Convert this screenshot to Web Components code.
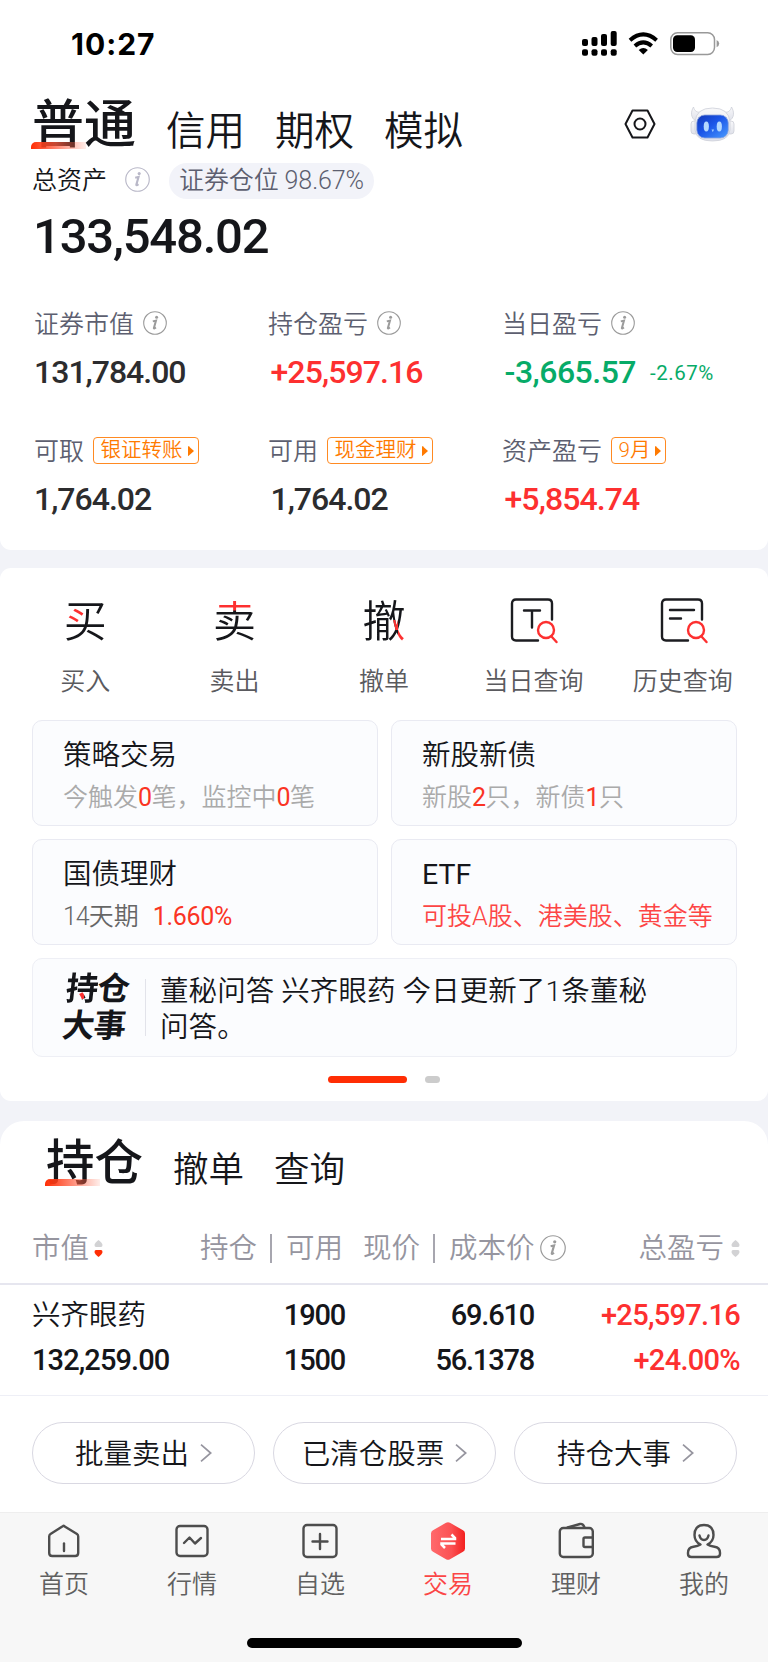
<!DOCTYPE html>
<html lang="zh-CN">
<head>
<meta charset="utf-8">
<title>交易</title>
<style>
    html, body { margin: 0; padding: 0; }
    body {
        width: 768px; height: 1662px; overflow: hidden;
        background: #f2f3f8; color: #15161a;
        font-family: Roboto, "Noto Sans CJK SC", sans-serif;
        font-weight: 350; line-height: 1.3;
    }
</style>
</head>
<body>
<trade-page></trade-page>
<script>
// shared base: every element writes its template in an open shadow root
class BaseElement extends HTMLElement {
    constructor() {
        super();
        this.attachShadow({ mode: 'open' });
    }
    connectedCallback() {
        this.shadowRoot.innerHTML = this.render();
    }
    attr(name, fallback = '') {
        return this.getAttribute(name) || fallback;
    }
}

class InfoMark extends BaseElement {
    render() {
        const size = this.attr('size', '24');
        const color = this.attr('color', '#9b9b9b');
        return `
            <style>:host { display: block; flex: none; line-height: 0; }</style>
            <svg width="${size}" height="${size}" viewBox="0 0 24 24" fill="none">
                <circle cx="12" cy="12" r="11.3" stroke="${color}" stroke-width="1.1"/>
                <circle cx="13.6" cy="6.3" r="1.5" fill="${color}"/>
                <path d="M9.800 10.400l3.200-.8-2.100 7.300c-.2.9.4.8 2-.5" stroke="${color}" stroke-width="2"/>
            </svg>
        `;
    }
}
customElements.define('info-mark', InfoMark);

class StatusBar extends BaseElement {
    render() {
        return `
            <style>
                :host { display: flex; justify-content: space-between; height: 88px; padding: 0 48px 0 71px; }
                .time { font: 700 30px/88px Inter, sans-serif; color: #000; letter-spacing: 1px; }
                .icons { display: flex; padding-top: 31px; }
            </style>
            <span class="time">10:27</span>
            <div class="icons">
                <svg width="138" height="26" viewBox="0 0 138 26">
                    <g fill="#000">
                        <rect x="0" y="8" width="6" height="7" rx="2"/>
                        <rect x="9.5" y="6" width="6" height="9" rx="2"/>
                        <rect x="19" y="3" width="6" height="12" rx="2"/>
                        <rect x="28.7" y="0" width="6" height="15" rx="2"/>
                        <rect x="0" y="18.3" width="6" height="6.5" rx="2"/>
                        <rect x="9.5" y="18.3" width="6" height="6.5" rx="2"/>
                        <rect x="19" y="18.3" width="6" height="6.5" rx="2"/>
                        <rect x="28.7" y="18.3" width="6" height="6.5" rx="2"/>
                        <path d="M61.3 23.5l-4.6-4.6q4.6-3.6 9.2 0z"/>
                    </g>
                    <g fill="none" stroke="#000" stroke-width="4">
                        <path d="M48 9.2q13.300-11.600 26.600 0"/>
                        <path d="M52.900 14.900q8.400-7.200 16.800 0"/>
                    </g>
                    <rect x="88.800" y="1.800" width="43.700" height="21.600" rx="6.800" fill="none" stroke="#999" stroke-width="1.500"/>
                    <rect x="91" y="4.200" width="22" height="16.800" rx="4.200"/>
                    <path d="M134.600 9q2.600 1.200 2.600 3.600t-2.600 3.600z" fill="#999"/>
                </svg>
            </div>
        `;
    }
}
customElements.define('status-bar', StatusBar);

// first tab is the selected one, the size comes from css variables
class SectionTabs extends BaseElement {
    render() {
        const [active, ...rest] = this.attr('items').split(',');
        return `
            <style>
                :host { display: flex; align-items: flex-start; gap: var(--gap, 30px); font-size: var(--size, 39.500px); line-height: 1.3; white-space: nowrap; }
                .tab { padding-top: var(--drop, 11px); }
                .active { position: relative; font-size: var(--active-size, 52px); font-weight: 500; line-height: 1.2; }
                .active::after {
                    content: ""; position: absolute; left: -1px; bottom: var(--mark, 8px); width: 55px; height: 7px;
                    border-radius: 5px 0 0 0;
                    background: linear-gradient(90deg, #ff2d04, rgba(255, 90, 60, .75) 45%, rgba(255, 120, 90, .12));
                }
            </style>
            <span class="active">${active}</span>
            ${rest.map(item => `<span class="tab">${item}</span>`).join('')}
        `;
    }
}
customElements.define('section-tabs', SectionTabs);

class HeadTools extends BaseElement {
    render() {
        return `
            <style>:host { display: flex; align-items: center; gap: 34px; }</style>
            <svg width="32" height="30" viewBox="0 0 32 30" fill="none" stroke="#16171b" stroke-width="2" stroke-linejoin="round">
                <path d="M8.500 1.500h15L30.500 15l-7 13.500h-15L1.500 15z"/>
                <circle cx="16" cy="15" r="5.500"/>
            </svg>
            <svg width="45" height="36" viewBox="0 0 45 36">
                <defs>
                    <linearGradient id="face" x1="0" y1="0" x2="1" y2="1">
                        <stop offset="0" stop-color="#1238b8"/><stop offset=".45" stop-color="#1b55e8"/><stop offset="1" stop-color="#4a9cff"/>
                    </linearGradient>
                    <linearGradient id="shell" x1="0" y1="0" x2="0" y2="1">
                        <stop offset="0" stop-color="#f8f8fa"/><stop offset="1" stop-color="#dfe1ea"/>
                    </linearGradient>
                </defs>
                <g fill="url(#shell)" stroke="#cdcfd8" stroke-width=".8">
                    <path d="M3.500 1C.500 6 .500 12 6 15L12 6C7 7 4.500 5 3.500 1zM41.500 1c3 5 3 11-2.500 14l-6-9c5 1 7.500-1 8.500-5z"/>
                    <rect x="1" y="15" width="7" height="13" rx="3"/>
                    <rect x="37" y="15" width="7" height="13" rx="3"/>
                    <path d="M5 16Q6 2 22.500 2T40 16v8q-1 11-17.500 11T5 24z"/>
                </g>
                <rect x="6.800" y="9" width="31.500" height="23" rx="8" fill="url(#face)" stroke="#8fa6dc" stroke-width=".8"/>
                <ellipse cx="16.300" cy="20.500" rx="2.600" ry="5" fill="#b4d8ff"/>
                <ellipse cx="29.300" cy="20.500" rx="2.600" ry="5" fill="#b4d8ff"/>
                <path d="M21.500 23.500h2.600l-1.300 2.800z" fill="#9fcbff"/>
            </svg>
        `;
    }
}
customElements.define('head-tools', HeadTools);

class AssetMetric extends BaseElement {
    render() {
        const tag = this.attr('tag');
        const note = this.attr('note');
        return `
            <style>
                :host { display: flex; flex-direction: column; white-space: nowrap; }
                .label { display: flex; align-items: center; height: 36px; font-size: 25px; color: #5d5f70; gap: 8.500px; }
                .value { display: flex; align-items: center; height: 38px; margin-top: 11px; margin-left: var(--shift, 0); font-size: 32px; font-weight: 500; letter-spacing: -1px; color: #2c2c2e; gap: 14px; }
                .value.up { color: #fd3030; letter-spacing: -.900px; }
                .value.down { color: #07ab68; letter-spacing: -.500px; }
                .note { font-size: 20.500px; font-weight: 450; letter-spacing: .500px; }
                .tag { box-sizing: border-box; height: 27px; display: flex; align-items: center; gap: 5px; padding: 0 4px 0 7px; border: 1px solid #ff8a22; border-radius: 4px; color: #ff7a00; font-size: 20.500px; margin-top: -3px; }
                .tag svg { display: block; }
                info-mark { margin-top: -4px; }
            </style>
            <div class="label">
                <span>${this.attr('label')}</span>
                ${tag
                    ? `<span class="tag">${tag}<svg width="6" height="10" viewBox="0 0 6 10"><path d="M0 .5q0-.7.700-.2L6 5 .700 9.700Q0 10.200 0 9.500z" fill="#ff7a00"/></svg></span>`
                    : '<info-mark></info-mark>'}
            </div>
            <div class="value ${this.attr('trend')}">
                <span>${this.attr('value')}</span>
                ${note ? `<span class="note">${note}</span>` : ''}
            </div>
        `;
    }
}
customElements.define('asset-metric', AssetMetric);

class AssetPanel extends BaseElement {
    render() {
        return `
            <style>
                :host { display: block; box-sizing: border-box; height: 550px; background: #fff; border-radius: 0 0 11px 11px; }
                .head { display: flex; justify-content: space-between; height: 75px; padding: 0 33px 0 32px; }
                section-tabs { margin-top: 7px; }
                head-tools { height: 71px; }
                .total { display: flex; align-items: center; height: 36px; padding-left: 32px; font-size: 25px; }
                .total info-mark { margin: -4px 19px 0 18px; }
                .pill { height: 36px; line-height: 35px; padding: 0 10px; border-radius: 18px; background: #f2f3f9; color: #5d5f70; white-space: nowrap; letter-spacing: -.1px; }
                .amount { padding-left: 33px; height: 74px; line-height: 75px; font-size: 49px; font-weight: 500; letter-spacing: -1.200px; }
                .grid { display: grid; grid-template-columns: repeat(3, 234px); row-gap: 42px; padding: 34px 0 0 34px; }
                asset-metric:not(:nth-child(3n+1)) { --shift: 2.500px; }
            </style>
            <status-bar></status-bar>
            <div class="head">
                <section-tabs items="普通,信用,期权,模拟"></section-tabs>
                <head-tools></head-tools>
            </div>
            <div class="total">
                <span>总资产</span>
                <info-mark size="25" color="#b9b8c8"></info-mark>
                <span class="pill">证券仓位 98.67%</span>
            </div>
            <div class="amount">133,548.02</div>
            <div class="grid">
                <asset-metric label="证券市值" value="131,784.00"></asset-metric>
                <asset-metric label="持仓盈亏" value="+25,597.16" trend="up"></asset-metric>
                <asset-metric label="当日盈亏" value="-3,665.57" note="-2.67%" trend="down"></asset-metric>
                <asset-metric label="可取" value="1,764.02" tag="银证转账"></asset-metric>
                <asset-metric label="可用" value="1,764.02" tag="现金理财"></asset-metric>
                <asset-metric label="资产盈亏" value="+5,854.74" tag="9月" trend="up"></asset-metric>
            </div>
        `;
    }
}
customElements.define('asset-panel', AssetPanel);

class QuickAction extends BaseElement {
    static GLASS = '<g stroke="#fd3030"><circle cx="36" cy="32" r="8"/><path d="M41.500 38.500l5 5.500"/></g>';
    static ICONS = {
        today: '<path d="M28 42.500H6q-4 0-4-4V5.500q0-4 4-4h32q4 0 4 4v16"/><path d="M14 12.500h16M22 12.500v17"/>',
        history: '<path d="M28 42.500H6q-4 0-4-4V5.500q0-4 4-4h32q4 0 4 4v16"/><path d="M10 12h24M10 20.500h11"/>'
    };
    render() {
        const icon = QuickAction.ICONS[this.attr('icon')];
        const word = this.attr('word');
        return `
            <style>
                :host { display: flex; flex-direction: column; align-items: center; color: #5a5a5e; white-space: nowrap; }
                .icon { height: 70px; display: flex; align-items: center; }
                svg { display: block; margin-left: 2px; }
                .word { font-size: 43px; line-height: 62px; padding-top: 1px; color: transparent; -webkit-background-clip: text; background-clip: text; background-color: #15161a; background-repeat: no-repeat; }
                /* one part of the sign is tinted red */
                .buy { background-image: linear-gradient(#fd3030, #fd3030); background-size: 17px 16px; background-position: 3px 17px; }
                .sell { background-image: linear-gradient(#fd3030, #fd3030); background-size: 43px 11.500px; background-position: 0 9px; }
                .cancel { background-image: linear-gradient(#fd3030, #fd3030), linear-gradient(#fd3030, #fd3030); background-size: 5px 10px, 7px 16px; background-position: 31px 30px, 36px 40px; }
                .label { font-size: 25px; line-height: 34px; margin-top: 9px; }
            </style>
            <div class="icon">
                ${icon
                    ? `<svg width="48" height="46" viewBox="0 0 48 46" fill="none" stroke="#1c1d21" stroke-width="2.400" stroke-linecap="round">${icon}${QuickAction.GLASS}</svg>`
                    : `<span class="word ${this.attr('kind')}">${word}</span>`}
            </div>
            <div class="label">${this.attr('label')}</div>
        `;
    }
}
customElements.define('quick-action', QuickAction);

class PromoCard extends BaseElement {
    render() {
        return `
            <style>
                :host { display: block; box-sizing: border-box; border: 1px solid #e9eaf2; border-radius: 10px; background: #fbfcfe; padding: 15px 0 0 30px; white-space: nowrap; }
                .title { font-size: 28.500px; line-height: 40px; font-weight: var(--title-weight, 350); }
                .sub { font-size: 25px; line-height: 36px; margin-top: 4px; color: var(--sub, #aaa); }
                ::slotted(b) { font-weight: 400; color: #fa3424; letter-spacing: -.600px; }
            </style>
            <div class="title">${this.attr('title')}</div>
            <div class="sub"><slot></slot></div>
        `;
    }
}
customElements.define('promo-card', PromoCard);

class NoticeCard extends BaseElement {
    render() {
        return `
            <style>
                :host { display: flex; align-items: center; box-sizing: border-box; height: 99px; border: 1px solid #eeeff5; border-radius: 10px; background: #fbfcfe; padding: 0 60px 0 31px; }
                .logo { width: 70px; font-size: 32.500px; line-height: 37px; font-weight: 700; transform: skewX(-6deg); letter-spacing: -1px; padding-top: 1px; }
                .logo .red { color: transparent; background: linear-gradient(#fd3030, #fd3030) 11px 22px / 8px 7px no-repeat #15161a; -webkit-background-clip: text; background-clip: text; }
                .line { width: 1px; height: 57px; background: #e2e3ea; margin: 0 14px 0 11px; }
                .text { width: 500px; font-size: 28.500px; line-height: 36.500px; padding-top: 5px; letter-spacing: .070px; }
            </style>
            <div class="logo"><span class="red">持</span>仓<br>大事</div>
            <div class="line"></div>
            <div class="text"><slot></slot></div>
        `;
    }
}
customElements.define('notice-card', NoticeCard);

class ActionPanel extends BaseElement {
    render() {
        return `
            <style>
                :host { display: block; box-sizing: border-box; height: 533px; margin-top: 18px; padding-top: 18px; background: #fff; border-radius: 11px; }
                .actions { display: grid; grid-template-columns: repeat(5, 149.400px); justify-content: center; height: 134px; }
                .cards { display: grid; grid-template-columns: 1fr 1fr; grid-auto-rows: 106px; gap: 13px; padding: 0 31px 0 32px; }
                notice-card { grid-column: 1 / -1; }
                .dots { display: flex; justify-content: center; gap: 18px; padding-top: 12px; }
                .dots i { width: 15px; height: 7px; border-radius: 4px; background: #ccc; }
                .dots i.on { width: 79px; background: #ff2d04; }
                .gray { --sub: #666; }
                .red { --sub: #fd4545; --title-weight: 400; }
                .days { letter-spacing: -1px; }
                .gray .rate { margin-left: 14px; letter-spacing: -.300px; }
            </style>
            <div class="actions">
                <quick-action kind="buy" word="买" label="买入"></quick-action>
                <quick-action kind="sell" word="卖" label="卖出"></quick-action>
                <quick-action kind="cancel" word="撤" label="撤单"></quick-action>
                <quick-action icon="today" label="当日查询"></quick-action>
                <quick-action icon="history" label="历史查询"></quick-action>
            </div>
            <div class="cards">
                <promo-card title="策略交易">今触发<b>0</b>笔，监控中<b>0</b>笔</promo-card>
                <promo-card title="新股新债">新股<b>2</b>只，新债<b>1</b>只</promo-card>
                <promo-card title="国债理财" class="gray"><span class="days">14</span>天期<b class="rate">1.660%</b></promo-card>
                <promo-card title="ETF" class="red">可投A股、港美股、黄金等</promo-card>
                <notice-card>董秘问答 兴齐眼药 今日更新了1条董秘问答。</notice-card>
            </div>
            <div class="dots"><i class="on"></i><i></i></div>
        `;
    }
}
customElements.define('action-panel', ActionPanel);

class SortMark extends BaseElement {
    render() {
        const down = this.hasAttribute('down') ? '#ff2d04' : '#d2d2d4';
        return `
            <style>:host { display: block; line-height: 0; }</style>
            <svg width="9" height="17" viewBox="0 0 9 17">
                <path d="M4.500 0Q8.500 3 8.500 5 8.500 7 7 7H2Q.500 7 .500 5 .500 3 4.500 0z" fill="#d2d2d4"/>
                <path d="M4.500 17Q.500 14 .500 12 .500 10 2 10h5q1.500 0 1.500 2 0 2-4 5z" fill="${down}"/>
            </svg>
        `;
    }
}
customElements.define('sort-mark', SortMark);

class HoldingsTable extends BaseElement {
    render() {
        return `
            <style>
                :host { display: block; }
                .head, .row { display: grid; padding: 0 28px 0 32px; white-space: nowrap; font-size: 28.500px; }
                .head { grid-template-columns: 168px 163px 203px 1fr; height: 71px; align-items: center; color: #96959f; border-bottom: 2px solid #e6e6ef; }
                .head div { display: flex; align-items: center; line-height: 34px; padding-top: 3px; }
                .head .end { justify-content: flex-end; gap: 7px; }
                .head .first { gap: 5px; }
                .bar { width: 2px; height: 29px; background: #a7a6af; margin: -1px 14px 0 13px; }
                .head info-mark { margin-left: 5px; margin-top: -3px; }
                .head sort-mark { margin-top: -2px; }
                .row { grid-template-columns: 150px 163px 189px 1fr; height: 111px; box-sizing: border-box; padding-top: 8px; border-bottom: 1px solid #eeeff6; grid-auto-rows: 45px; align-items: center; }
                .row span { text-align: right; font-weight: 500; font-size: 29px; letter-spacing: -1.200px; }
                .row span:nth-child(4n+1) { text-align: left; letter-spacing: -.900px; }
                .row span.name { font-weight: 350; font-size: 28.500px; letter-spacing: 0; }
                .row .up { color: #fd3030; letter-spacing: -.700px; }
            </style>
            <div class="head">
                <div class="first">市值<sort-mark down></sort-mark></div>
                <div>持仓<i class="bar"></i>可用</div>
                <div>现价<i class="bar"></i>成本价<info-mark size="26"></info-mark></div>
                <div class="end">总盈亏<sort-mark></sort-mark></div>
            </div>
            <div class="row">
                <span class="name">兴齐眼药</span><span>1900</span><span>69.610</span><span class="up">+25,597.16</span>
                <span>132,259.00</span><span>1500</span><span>56.1378</span><span class="up">+24.00%</span>
            </div>
        `;
    }
}
customElements.define('holdings-table', HoldingsTable);

class PillButton extends BaseElement {
    render() {
        return `
            <style>
                :host { display: flex; align-items: center; justify-content: center; gap: 11px; box-sizing: border-box; height: 62px; padding-top: 3px; border: 1px solid #d9d8e2; border-radius: 31px; font-size: 28.500px; white-space: nowrap; }
                svg { display: block; margin-top: -3px; }
            </style>
            <slot></slot>
            <svg width="12" height="18" viewBox="0 0 12 18" fill="none" stroke="#96959f" stroke-width="1.700"><path d="M1 .700L10.700 9 1 17.300"/></svg>
        `;
    }
}
customElements.define('pill-button', PillButton);

class HoldingsPanel extends BaseElement {
    render() {
        return `
            <style>
                :host { display: block; box-sizing: border-box; height: 391px; margin-top: 20px; background: #fff; border-radius: 24px 24px 0 0; }
                section-tabs { --size: 35.500px; --active-size: 48.500px; --gap: 30px; --mark: 7px; --drop: 12px; height: 91px; padding: 14px 0 0 46px; box-sizing: border-box; }
                .buttons { display: grid; grid-template-columns: repeat(3, 1fr); gap: 18px; padding: 26px 31px 0 32px; }
            </style>
            <section-tabs items="持仓,撤单,查询"></section-tabs>
            <holdings-table></holdings-table>
            <div class="buttons">
                <pill-button>批量卖出</pill-button>
                <pill-button>已清仓股票</pill-button>
                <pill-button>持仓大事</pill-button>
            </div>
        `;
    }
}
customElements.define('holdings-panel', HoldingsPanel);

class NavItem extends BaseElement {
    static ICONS = {
        home: '<path d="M18.500 3.700L32 12q1.200.8 1.200 2.500V31q0 3-3 3h-23q-3 0-3-3V14.500Q4.200 12.800 5.500 12L17.300 4.400q1.200-.9 2.400 0z"/><path d="M19 21.500v7.500"/>',
        quote: '<rect x="3.500" y="4" width="31" height="30" rx="3.500"/><path d="M11 21l5.500-5.500 5.500 6 6-5.500"/>',
        star: '<rect x="2.500" y="3" width="33" height="32" rx="3.500"/><path d="M19 12v15M11.500 19.500h15"/>',
        wallet: '<rect x="2.800" y="6" width="33" height="29" rx="3.500"/><path d="M10.500 5.500L23 2q3-.7 4.500 3.500M35 15.500h-7q-1.500 0-1.500 1.500v6.500q0 1.500 1.500 1.500h7"/>',
        me: '<path d="M15.500 22.500Q9.500 19.500 9.500 13 9.500 3 19 3t9.500 10q0 6.500-6 9.500 2.500 1.500 7 2.200 5.500.8 5.500 6v1.300q0 3-3.500 3h-25Q3 35 3 32v-1.300q0-5.200 5.500-6 4.500-.7 7-2.200z"/><path d="M14.500 13.500q1 4.500 4.500 4.500t4.500-4.500"/>'
    };
    render() {
        const icon = NavItem.ICONS[this.attr('icon')];
        return `
            <style>
                :host { display: flex; flex-direction: column; align-items: center; font-size: 25px; color: #606060; padding-top: 9px; }
                :host([active]) { color: #fb4646; }
                svg { display: block; }
                .label { line-height: 34px; margin-top: 8px; }
            </style>
            ${icon
                ? `<svg width="38" height="38" viewBox="0 0 38 38" fill="none" stroke="#4d4d4d" stroke-width="2.400" stroke-linecap="round" stroke-linejoin="round">${icon}</svg>`
                : `<svg width="38" height="38" viewBox="0 0 38 38">
                    <defs><linearGradient id="hex"><stop offset="0" stop-color="#ff6a6c"/><stop offset=".6" stop-color="#fb5153"/><stop offset="1" stop-color="#f3201f"/></linearGradient></defs>
                    <path d="M17 .800q2-1.100 4 0l13 7.400q2 1.100 2 3.300v15q0 2.200-2 3.300l-13 7.400q-2 1.100-4 0L4 29.800q-2-1.100-2-3.300v-15Q2 9.300 4 8.200z" fill="url(#hex)"/>
                    <path d="M12 17h14v-1l-3.500-3.500M26.500 21.500h-14v1l3.500 3.500" fill="none" stroke="#fff" stroke-width="2.500"/>
                </svg>`}
            <span class="label">${this.attr('label')}</span>
        `;
    }
}
customElements.define('nav-item', NavItem);

class NavBar extends BaseElement {
    render() {
        return `
            <style>
                :host { display: block; box-sizing: border-box; height: 150px; background: #f7f7f7; border-top: 1px solid #eee; }
                .items { display: grid; grid-template-columns: repeat(6, 1fr); height: 125px; }
                .grip { width: 275px; height: 10px; border-radius: 5px; background: #000; margin: 0 auto; }
            </style>
            <div class="items">
                <nav-item icon="home" label="首页"></nav-item>
                <nav-item icon="quote" label="行情"></nav-item>
                <nav-item icon="star" label="自选"></nav-item>
                <nav-item icon="trade" label="交易" active></nav-item>
                <nav-item icon="wallet" label="理财"></nav-item>
                <nav-item icon="me" label="我的"></nav-item>
            </div>
            <div class="grip"></div>
        `;
    }
}
customElements.define('nav-bar', NavBar);

class TradePage extends BaseElement {
    render() {
        return `
            <style>:host { display: flex; flex-direction: column; width: 768px; height: 1662px; }</style>
            <asset-panel></asset-panel>
            <action-panel></action-panel>
            <holdings-panel></holdings-panel>
            <nav-bar></nav-bar>
        `;
    }
}
customElements.define('trade-page', TradePage);
</script>
</body>
</html>
